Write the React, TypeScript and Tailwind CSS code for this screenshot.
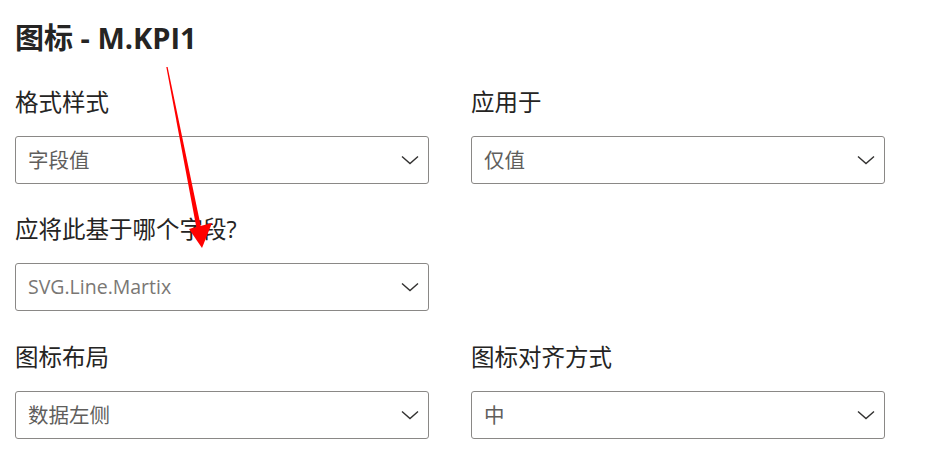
import type { ReactNode } from 'react';

const font = { fontFamily: '"Segoe UI", "Open Sans", "Noto Sans CJK SC", sans-serif' };

function Chevron() {
	return (
		<svg width="18" height="10" viewBox="0 0 18 10" fill="none" className="shrink-0">
			<path d="M1 1.5 L9 8.5 L17 1.5" stroke="#323130" strokeWidth="1.4" />
		</svg>
	);
}

function Field({ label, value, muted }: { label: string; value: string; muted?: boolean }) {
	return (
		<div className="flex w-[414px] flex-col gap-[20px]">
			<span className="h-[28px] text-[23.5px] leading-[28px] text-[#252423]">{label}</span>
			<div className="flex h-[48px] items-center justify-between rounded-[3px] border border-[#8a8886] bg-white pl-[12px] pr-[9px]">
				<span className={muted ? 'text-[19.5px] text-[#7a7774]' : 'text-[20.5px] text-[#605e5c]'}>{value}</span>
				<Chevron />
			</div>
		</div>
	);
}

function Row({ children, className }: { children: ReactNode; className?: string }) {
	return <div className={className ? `flex gap-[42px] ${className}` : 'flex gap-[42px]'}>{children}</div>;
}

export default function App() {
	return (
		<div className="relative h-[465px] w-[928px] overflow-hidden bg-white pl-[15px] pt-[20px]" style={font}>
			<h1 className="h-[36px] text-[29px] font-bold leading-[36px] text-[#252423]">图标 - M.KPI1</h1>
			<div className="mt-[32px] flex flex-col gap-[31px]">
				<Row>
					<Field label="格式样式" value="字段值" />
					<Field label="应用于" value="仅值" />
				</Row>
				<Row>
					<Field label="应将此基于哪个字段?" value="SVG.Line.Martix" muted />
				</Row>
				<Row className="mt-px">
					<Field label="图标布局" value="数据左侧" />
					<Field label="图标对齐方式" value="中" />
				</Row>
			</div>
			{/* red annotation arrow */}
			<svg className="pointer-events-none absolute left-0 top-0" width="928" height="465">
				<polygon points="166.3,67 167.6,67 201.8,231 197,231" fill="#ff0000" />
				<polygon points="189,229 212,223 202,248" fill="#ff0000" />
			</svg>
		</div>
	);
}
